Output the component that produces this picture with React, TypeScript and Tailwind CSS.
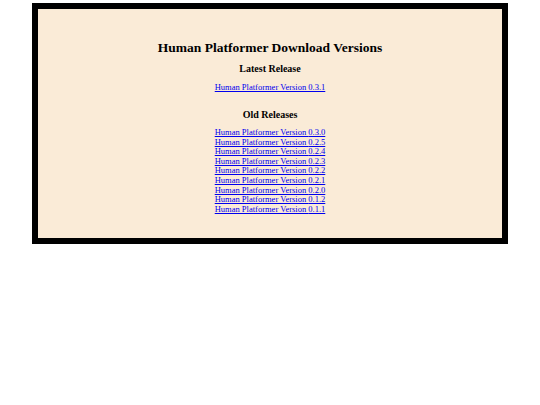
export default function App() {
  const oldVersions = [
    "0.3.0",
    "0.2.5",
    "0.2.4",
    "0.2.3",
    "0.2.2",
    "0.2.1",
    "0.2.0",
    "0.1.2",
    "0.1.1",
  ];
  return (
    <div
      className="w-[540px] h-[405px] bg-white pt-[3px]"
      style={{ fontFamily: '"Liberation Serif", "Times New Roman", serif' }}
    >
      <div className="mx-auto w-[476px] border-[6px] border-black bg-[#faebd7] pt-[30px] pb-[24px] flex flex-col items-center text-center text-black">
        <h1 className="text-[13.5px] leading-[17px] font-bold">
          Human Platformer Download Versions
        </h1>
        <h3 className="mt-[7px] text-[10px] leading-[12px] font-bold">
          Latest Release
        </h3>
        <a
          href="#"
          className="mt-[7px] text-[8.5px] leading-[10px] text-[#0000ee] underline"
        >
          Human Platformer Version 0.3.1
        </a>
        <h3 className="mt-[17px] text-[10px] leading-[12px] font-bold">
          Old Releases
        </h3>
        <div className="mt-[7px] flex flex-col items-center">
          {oldVersions.map((v) => (
            <a
              key={v}
              href="#"
              className="text-[8.5px] leading-[9.6px] text-[#0000ee] underline"
            >
              Human Platformer Version {v}
            </a>
          ))}
        </div>
      </div>
    </div>
  );
}
